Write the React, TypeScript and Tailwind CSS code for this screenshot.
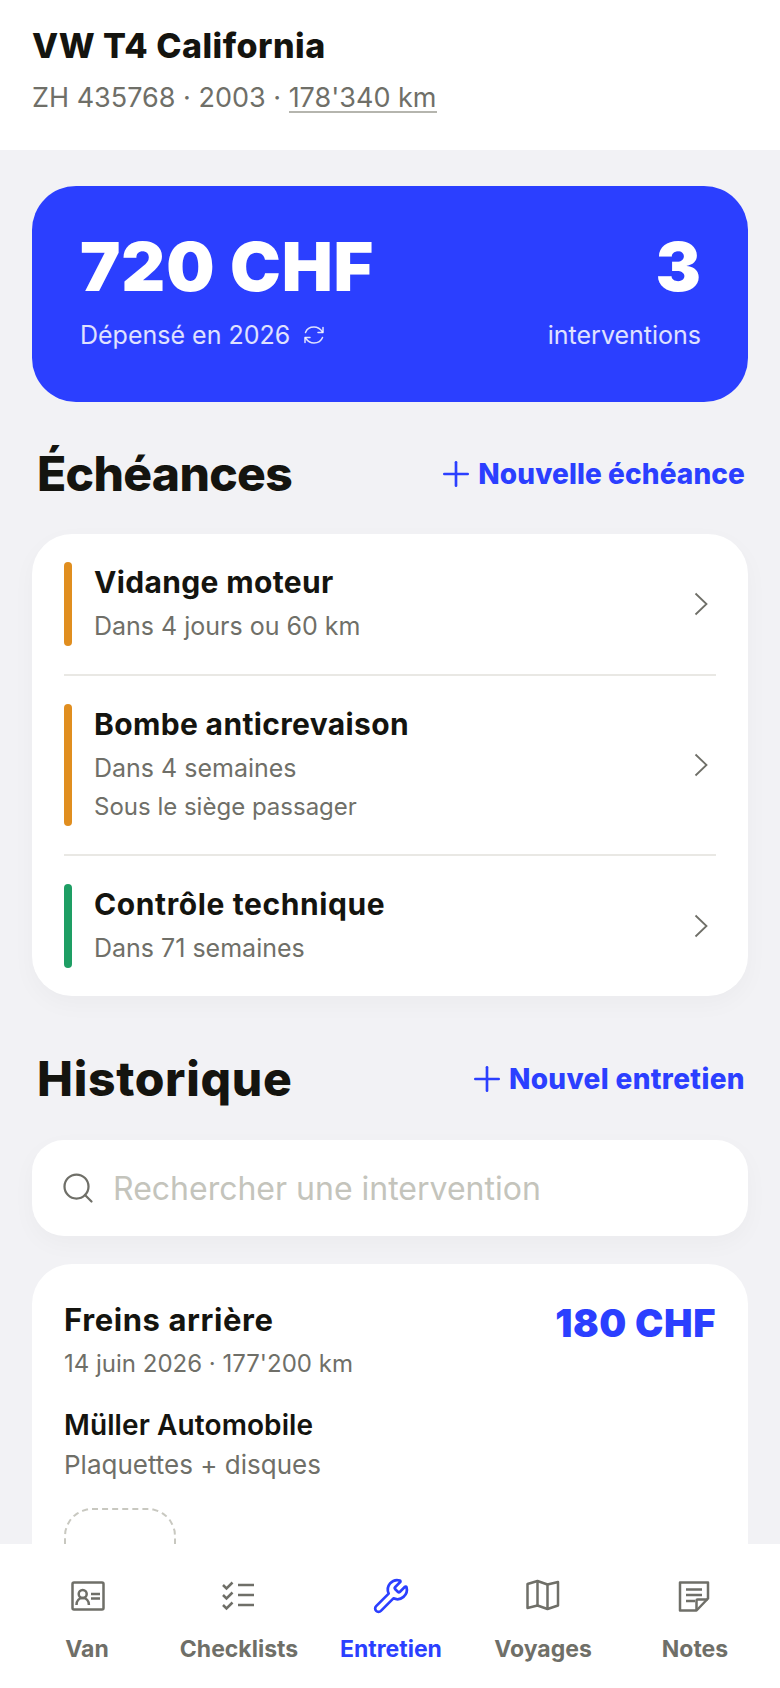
import { Plus, Search, Wrench } from 'lucide-react';

const deadlines = [
  { title: 'Vidange moteur', lines: ['Dans 4 jours ou 60 km'], bar: 'bg-[#e08e1f]', tracking: 'tracking-[0.35px]' },
  { title: 'Bombe anticrevaison', lines: ['Dans 4 semaines', 'Sous le siège passager'], bar: 'bg-[#e08e1f]', tracking: 'tracking-[0.35px]' },
  { title: 'Contrôle technique', lines: ['Dans 71 semaines'], bar: 'bg-[#1e9e64]', tracking: 'tracking-[0.6px]' },
];

function VanIcon() {
  return (
    <svg viewBox="0 0 40 40" className="ml-[2px] h-10 w-10" fill="none" stroke="currentColor" strokeWidth="2.5">
      <rect x="4.5" y="6.5" width="31" height="27" rx="1.5" />
      <circle cx="14.7" cy="18" r="4" />
      <path d="M8.5 29c0-4.500 2.800-7 6.200-7s6.200 2.500 6.200 7" />
      <path d="M23 18h9M23 22.600h9" />
    </svg>
  );
}

function ChecklistIcon() {
  return (
    <svg viewBox="0 0 40 40" className="h-10 w-10" fill="none" stroke="currentColor" strokeWidth="2.5">
      <path d="M19 9h16M19 19h16M19 29h16" />
      <path d="M4 9l3.500 3.500 6-6M4 19l3.500 3.500 6-6M4 29l3.500 3.500 6-6" />
    </svg>
  );
}

function MapIcon() {
  return (
    <svg viewBox="0 0 40 40" className="h-10 w-10" fill="none" stroke="currentColor" strokeWidth="2.5" strokeLinejoin="round">
      <path d="M4.500 8l10-3 10 3.500 10.500-2.500v23.500l-10.500 3.500-10-3.500-10 2.500z" />
      <path d="M14.500 5v24.500M24.500 8.500v24.500" />
    </svg>
  );
}

function NoteIcon() {
  return (
    <svg viewBox="0 0 40 40" className="mr-[2px] h-10 w-10" fill="none" stroke="currentColor" strokeWidth="2.5" strokeLinejoin="round">
      <path d="M6 6.500h28v16l-11.500 12h-16.500z" />
      <path d="M22.500 34v-9.500a1 1 0 0 1 1-1h10" />
      <path d="M12 13.500h16M12 19h16M12 25h9" />
    </svg>
  );
}

function RefreshIcon() {
  return (
    <svg viewBox="0 0 24 24" className="h-6 w-6" fill="none" stroke="currentColor" strokeWidth="1.500" strokeLinecap="round" strokeLinejoin="round">
      <path d="M3.500 9.500C5 5.500 8.500 4 12 4c3.500 0 6.500 2 8.500 5" />
      <path d="M21 4.500v5h-5" />
      <path d="M20.500 14.500C19 18.500 15.500 20 12 20c-3.500 0-6.500-2-8.500-5" />
      <path d="M3 19.500v-5h5" />
    </svg>
  );
}

function Chevron() {
  return (
    <svg viewBox="0 0 14 24" className="mr-2 h-6 w-3.5 shrink-0 text-[#6f6f68]" fill="none" stroke="currentColor" strokeWidth="1.800">
      <path d="M1.500 1.500l11 10.500-11 10.500" />
    </svg>
  );
}

function SectionHead({ title, action, tracking, actionTracking }: { title: string; action: string; tracking: string; actionTracking: string }) {
  return (
    <div className="flex h-[72px] items-center justify-between pr-[3px] pl-[5px]">
      <h2 className={`text-[48px] font-extrabold text-[#14140f] ${tracking}`}>{title}</h2>
      <span className={`flex items-center gap-[2px] text-[28px] font-extrabold text-[#2b3fff] ${actionTracking}`}>
        <Plus size={40} strokeWidth={1.6} />
        {action}
      </span>
    </div>
  );
}

const tabs = [
  { label: 'Van', icon: <VanIcon /> },
  { label: 'Checklists', icon: <ChecklistIcon /> },
  { label: 'Entretien', icon: <Wrench size={38} strokeWidth={1.7} />, active: true },
  { label: 'Voyages', icon: <MapIcon /> },
  { label: 'Notes', icon: <NoteIcon /> },
];

export default function App() {
  return (
    <div className="relative h-[1688px] w-[780px] overflow-hidden bg-[#f2f2f5] font-['Inter',sans-serif]">
      {/* Header */}
      <header className="flex h-[150px] flex-col bg-white px-8 pt-[26px]">
        <h1 className="text-[34px] leading-[40px] font-extrabold tracking-[0.5px] text-[#14140f]">VW T4 California</h1>
        <p className="mt-[12px] text-[27px] leading-[40px] text-[#6f6f68]">
          ZH 435768 · 2003 · <span className="inline-block border-b-2 border-[#b5b5ae] leading-[27px]">178'340 km</span>
        </p>
      </header>

      <main className="px-8 pt-9">
        {/* Total */}
        <section className="flex h-[216px] items-start justify-between rounded-[44px] bg-[#2b3fff] pt-[40px] pr-[47px] pl-[48px] text-white">
          <div>
            <div className="text-[68px] leading-[80px] font-black tracking-[0.9px]">720 CHF</div>
            <div className="mt-[11px] flex items-center gap-[12px] text-[25px] leading-[36px] text-white/85">
              Dépensé en 2026
              <RefreshIcon />
            </div>
          </div>
          <div className="text-right">
            <div className="text-[68px] leading-[80px] font-black">3</div>
            <div className="mt-[11px] text-[25px] leading-[36px] text-white/85">interventions</div>
          </div>
        </section>

        {/* Echeances */}
        <div className="mt-9 mb-6">
          <SectionHead title="Échéances" action="Nouvelle échéance" tracking="tracking-[-0.7px]" actionTracking="tracking-[0.1px]" />
        </div>
        <section className="rounded-[40px] bg-white px-8 shadow-[0_8px_24px_rgba(0,0,0,0.03)]">
          {deadlines.map((item, i) => (
            <div key={item.title} className={`flex items-center py-7 ${i < deadlines.length - 1 ? 'border-b-2 border-[#e9e8e4]' : ''}`}>
              <div className={`w-2 self-stretch rounded-full ${item.bar}`} />
              <div className="ml-[22px] flex-1">
                <div className={`text-[30px] leading-[40px] font-bold text-[#14140f] ${item.tracking}`}>{item.title}</div>
                {item.lines.map((line, j) => (
                  <div key={line} className={j === 0 ? 'mt-[4px] text-[25px] leading-[40px] text-[#6f6f68]' : 'text-[24px] leading-[38px] text-[#6f6f68]'}>{line}</div>
                ))}
              </div>
              <Chevron />
            </div>
          ))}
        </section>

        {/* Historique */}
        <div className="mt-[47px] mb-[25px]">
          <SectionHead title="Historique" action="Nouvel entretien" tracking="tracking-[0.7px]" actionTracking="tracking-[0.35px]" />
        </div>
        <div className="flex h-24 items-center gap-[17px] rounded-[32px] bg-white px-7 shadow-[0_8px_24px_rgba(0,0,0,0.03)]">
          <Search size={36} strokeWidth={1.5} className="shrink-0 text-[#6f6f68]" />
          <span className="mt-[2px] text-[32px] text-[#c4c4bc]">Rechercher une intervention</span>
        </div>

        <article className="mt-7 rounded-[40px] bg-white px-8 pt-[36px] pb-10">
          <div className="flex items-start justify-between">
            <div>
              <div className="text-[31px] leading-[40px] font-bold tracking-[0.6px] text-[#14140f]">Freins arrière</div>
              <div className="mt-[4px] text-[24px] leading-[40px] text-[#6f6f68]">14 juin 2026 · 177'200 km</div>
            </div>
            <div className="text-[38px] leading-[46px] font-black tracking-[0.6px] text-[#2b3fff]">180 CHF</div>
          </div>
          <div className="mt-[21px] text-[28px] leading-[40px] font-semibold tracking-[0.1px] text-[#14140f]">Müller Automobile</div>
          <div className="text-[26px] leading-[40px] text-[#6f6f68]">Plaquettes + disques</div>
          <div className="mt-[23px] h-28 w-28 rounded-[28px] border-2 border-dashed border-[#c8c8c0]" />
        </article>
      </main>

      <nav className="absolute right-0 bottom-0 left-0 grid h-[144px] grid-cols-5 bg-white pt-[32px] pr-[9px] pl-[11px]">
        {tabs.map((tab) => (
          <div key={tab.label} className={`flex flex-col items-center ${tab.active ? 'text-[#2b3fff]' : 'text-[#6f6f68]'}`}>
            <div className="flex h-10 items-center justify-center">{tab.icon}</div>
            <span className="mt-[17px] text-[23px] leading-[32px] font-bold">{tab.label}</span>
          </div>
        ))}
      </nav>
    </div>
  );
}
